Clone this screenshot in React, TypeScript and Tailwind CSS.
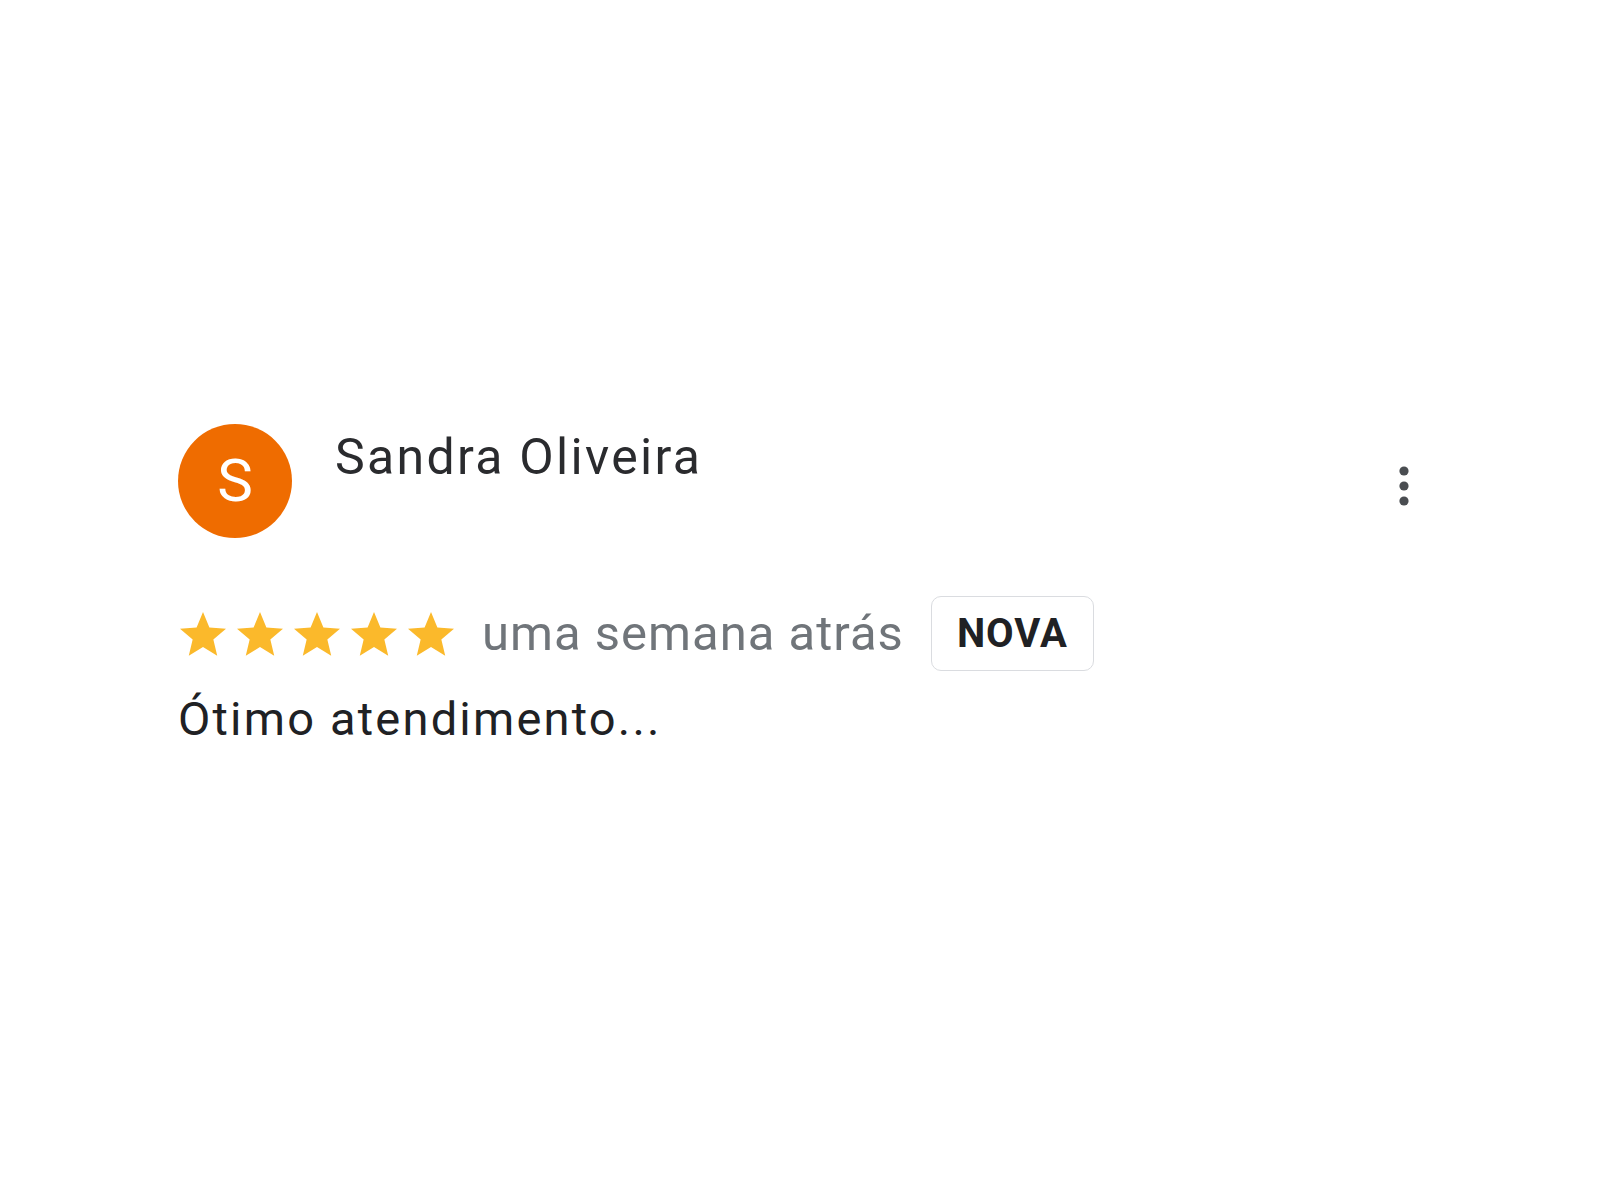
import React from "react";

function Star() {
  return (
    <svg width="46" height="44" viewBox="0 0 46 44" className="block">
      <polygon
        fill="#fbb92b"
        points="23,0 29.4,15.4 46,16.72 33.35,27.57 37.22,43.78 23,35.1 8.78,43.78 12.65,27.57 0,16.72 16.6,15.4"
      />
    </svg>
  );
}

export default function App() {
  return (
    <div className="w-[1600px] h-[1200px] bg-white font-['Roboto',_'Liberation_Sans',_sans-serif]">
      <div className="pt-[424px] pl-[178px] pr-[186px]">
        <div className="flex items-start justify-between">
          <div className="flex items-start">
            <div className="w-[114px] h-[114px] rounded-full bg-[#ef6c00] flex items-center justify-center text-white text-[60px] leading-none">
              S
            </div>
            <div className="ml-[43px] mt-[5px] text-[50px] leading-[56px] tracking-[2.3px] text-[#2a2b2e]">
              Sandra Oliveira
            </div>
          </div>
          <svg width="20" height="48" viewBox="0 0 20 48" className="block mt-[40px]">
            <circle cx="10" cy="7" r="4.6" fill="#4a4d51" />
            <circle cx="10" cy="22" r="4.6" fill="#4a4d51" />
            <circle cx="10" cy="37" r="4.6" fill="#4a4d51" />
          </svg>
        </div>

        <div className="mt-[58px] flex items-center">
          <div className="ml-[2px] flex items-center gap-[11px]">
            <Star />
            <Star />
            <Star />
            <Star />
            <Star />
          </div>
          <div className="ml-[28px] text-[49px] leading-none tracking-[1px] text-[#70757a]">
            uma semana atrás
          </div>
          <div className="ml-[27px] h-[75px] w-[163px] rounded-[10px] border-[1.5px] border-[#dadce0] flex items-center justify-center text-[40px] font-bold leading-none tracking-[1px] text-[#202124]">
            NOVA
          </div>
        </div>

        <div className="mt-[18px] text-[47px] leading-[60px] tracking-[2.2px] text-[#202124]">
          Ótimo atendimento...
        </div>
      </div>
    </div>
  );
}
